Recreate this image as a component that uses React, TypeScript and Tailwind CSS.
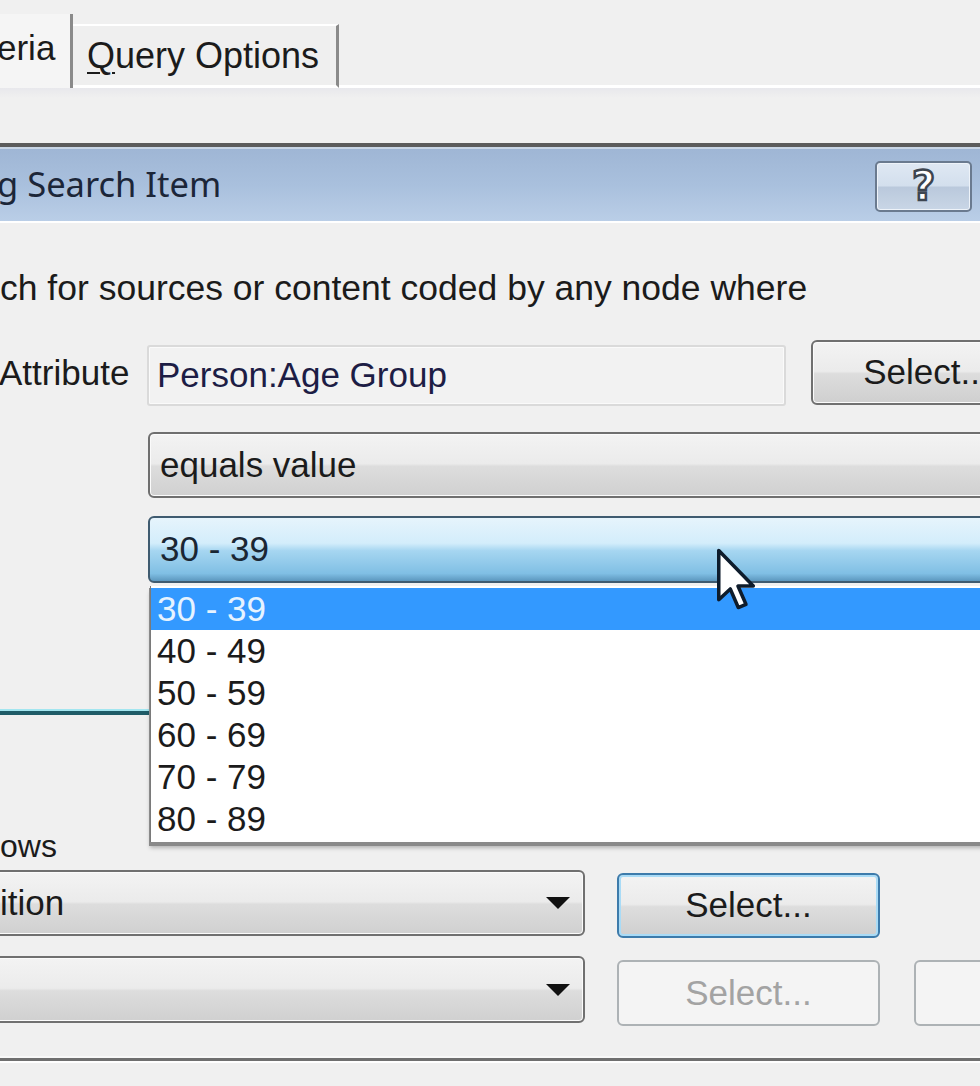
import React from 'react';

const ageGroups = ['30 - 39', '40 - 49', '50 - 59', '60 - 69', '70 - 79', '80 - 89'];

const ComboArrow = () => (
    <svg width="24" height="12" viewBox="0 0 24 12" className="shrink-0">
        <path d="M0 0 H24 L12 12 Z" fill="#111" />
    </svg>
);

const App = () => {
    return (
        <div className="relative w-[980px] h-[1086px] overflow-hidden bg-[#f0f0f0] font-['Liberation_Sans',Arial,sans-serif] text-[34px] text-[#1b1b1b]">

            {/* Tab strip */}
            <div className="flex items-end h-[88px]">
                <div className="h-[74px] w-[76px] bg-[#f5f5f5] border-r-[3px] border-[#8a8a8a] pt-[14px] leading-[40px] text-[35px] -ml-[3px] shrink-0">
                    eria
                </div>
                <div className="h-[64px] w-[266px] shrink-0 border-t-[2px] border-t-white border-r-[3px] border-r-[#8a8a8a] border-b-[3px] border-b-white bg-[#efefef] pl-[14px] pt-[12px] leading-[36px] text-[36px]">
                    <span className="underline underline-offset-[4px] decoration-[2px]">Q</span>uery Options
                </div>
                <div className="flex-1 h-[3px] bg-white"></div>
            </div>
            <div className="h-[10px] bg-[linear-gradient(to_bottom,#e8e8ec,#f0f0f0)]"></div>

            {/* Dialog */}
            <div className="mt-[45px] border-t-[4px] border-[#5c5c5c]">
                <div className="h-[2px] bg-[#c9d6e6]"></div>
                <div className="h-[74px] flex items-center justify-between bg-[linear-gradient(to_bottom,#9fb6d5_0%,#a9c0dd_50%,#bacee7_100%)] border-b-[2px] border-white">
                    <div className="-ml-[3px] font-['Noto_Sans',sans-serif] text-[34.5px] text-[#1c2638] leading-none pb-[2px]">
                        g Search Item
                    </div>
                    <div className="mr-[8px] mt-[2px] w-[97px] h-[51px] rounded-[5px] border-[2px] border-[#6a7a8f] bg-[linear-gradient(to_bottom,#dfe8f3_0%,#d3dfed_48%,#bac9dc_52%,#c9d6e6_100%)] shadow-[inset_0_0_0_1px_#eef3f9] flex items-center justify-center">
                        <span className="font-['DejaVu_Sans',sans-serif] font-bold text-[40px] leading-none text-white [-webkit-text-stroke:2.5px_#3d4550]">?</span>
                    </div>
                </div>

                {/* Body */}
                <div className="relative">
                    <div className="mt-[45px] leading-[40px] text-[35.5px] whitespace-nowrap">
                        ch for sources or content coded by any node where
                    </div>

                    <div className="mt-[32px] h-[66px] flex items-start">
                        <div className="w-[148px] shrink-0 pt-[14px] leading-[38px] text-[35px] -ml-[1px] whitespace-nowrap">Attribute</div>
                        <div className="mt-[5px] w-[639px] h-[61px] shrink-0 rounded-[3px] border-[2px] border-[#dadada] bg-[#f2f2f2] shadow-[inset_0_0_0_1px_#fafafa] flex items-center pl-[8px] text-[35px] text-[#1d1d45] whitespace-nowrap">
                            Person:Age Group
                        </div>
                        <div className="ml-[25px] w-[231px] h-[65px] shrink-0 rounded-[6px] border-[2px] border-[#707070] bg-[linear-gradient(to_bottom,#f3f3f3_0%,#ebebeb_48%,#dddddd_52%,#cfcfcf_100%)] shadow-[inset_0_0_0_1px_#fbfbfb] flex items-center justify-center whitespace-nowrap text-[35px]">
                            Select...
                        </div>
                    </div>

                    <div className="mt-[26px] ml-[148px] w-[900px] h-[66px] rounded-[6px] border-[2px] border-[#6f6f6f] bg-[linear-gradient(to_bottom,#f3f3f3_0%,#ebebeb_48%,#dddddd_52%,#d0d0d0_100%)] shadow-[inset_0_0_0_1px_#fbfbfb] flex items-center pl-[10px] text-[35px]">
                        equals value
                    </div>

                    <div className="mt-[18px] ml-[148px] w-[900px] h-[67px] rounded-[6px] border-[2px] border-[#3f5b70] bg-[linear-gradient(to_bottom,#e6f4fc_0%,#d3edfb_40%,#a6d6f1_52%,#80bfe4_88%,#5c97be_100%)] flex items-center pl-[10px] text-[35px] text-[#1a2633]">
                        30 - 39
                    </div>

                    {/* group line behind the open list */}
                    <div className="mt-[126px] h-[2px] bg-[#a3e6f0]"></div>
                    <div className="h-[4px] bg-[#1f5c68]"></div>

                    <div className="mt-[114px] leading-[34px] text-[32px]">ows</div>

                    <div className="mt-[7px] flex items-start">
                        <div className="-ml-[20px] w-[605px] h-[66px] shrink-0 rounded-[6px] border-[2px] border-[#707070] bg-[linear-gradient(to_bottom,#f3f3f3_0%,#ebebeb_48%,#dddddd_52%,#d0d0d0_100%)] shadow-[inset_0_0_0_1px_#fbfbfb] flex items-center justify-between pl-[18px] pr-[13px] text-[35px]">
                            <span>ition</span>
                            <ComboArrow />
                        </div>
                        <div className="ml-[32px] mt-[3px] w-[263px] h-[65px] shrink-0 rounded-[6px] border-[2px] border-[#3d7bab] bg-[linear-gradient(to_bottom,#f3f3f3_0%,#ebebeb_48%,#dddddd_52%,#cfcfcf_100%)] shadow-[inset_0_0_0_2px_#a9dbf6] flex items-center justify-center text-[35px]">
                            Select...
                        </div>
                    </div>

                    <div className="mt-[18px] flex items-start">
                        <div className="-ml-[20px] w-[605px] h-[67px] shrink-0 rounded-[6px] border-[2px] border-[#707070] bg-[linear-gradient(to_bottom,#f3f3f3_0%,#ebebeb_48%,#dddddd_52%,#d0d0d0_100%)] shadow-[inset_0_0_0_1px_#fbfbfb] flex items-center justify-end pr-[13px]">
                            <ComboArrow />
                        </div>
                        <div className="ml-[32px] mt-[4px] w-[263px] h-[66px] shrink-0 rounded-[6px] border-[2px] border-[#adb2b5] bg-[#f4f4f4] flex items-center justify-center text-[35px] text-[#a3a3a3]">
                            Select...
                        </div>
                        <div className="ml-[34px] mt-[4px] w-[200px] h-[66px] shrink-0 rounded-[6px] border-[2px] border-[#adb2b5] bg-[#f4f4f4]"></div>
                    </div>

                    <div className="mt-[30px] h-[2px] bg-[#f8f8f8]"></div>
                    <div className="h-[3px] bg-[#6f6f6f]"></div>
                    <div className="h-[2px] bg-white"></div>
                </div>
            </div>

            {/* Open drop-down list */}
            <div className="absolute left-[150px] top-[586px] w-[860px] h-[256px] bg-white border-l-[1px] border-[#7a7a7a] shadow-[0_3px_0_1px_#8a8a8a,0_6px_4px_rgba(0,0,0,0.25)] pt-[2px]">
                {ageGroups.map((g, i) => (
                    <div
                        key={g}
                        className={
                            i === 0
                                ? 'h-[42px] bg-[#3399ff] text-[#e6f3ff] pl-[6px] leading-[42px] text-[35px]'
                                : 'h-[42px] text-[#1b1b1b] pl-[6px] leading-[42px] text-[35px]'
                        }
                    >
                        {g}
                    </div>
                ))}
            </div>

            {/* Mouse pointer */}
            <svg className="absolute left-[716px] top-[548px]" width="42" height="64" viewBox="0 0 13 20">
                <path d="M0.8 0.8 L0.8 16.2 L4.4 12.8 L6.9 18.6 L9.3 17.6 L6.8 11.9 L11.6 11.9 Z" fill="#ffffff" stroke="#0e1c2c" strokeWidth="1.1" strokeLinejoin="round" />
            </svg>
        </div>
    );
};

export default App;
